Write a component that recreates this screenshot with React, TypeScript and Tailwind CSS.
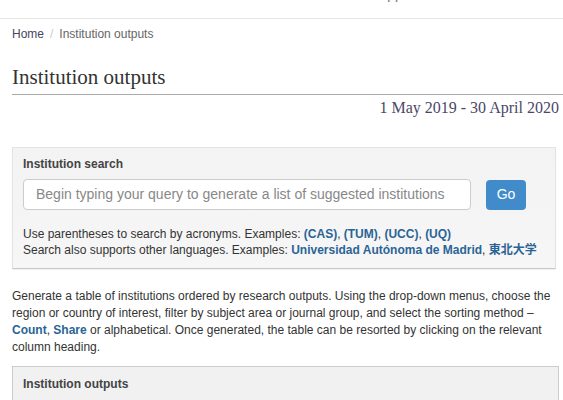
export default function App() {
  const sans = { fontFamily: '"Liberation Sans", Arial, "Noto Sans CJK SC", sans-serif' };
  const serif = { fontFamily: '"Liberation Serif", "Times New Roman", serif' };
  return (
    <div className="w-[563px] h-[400px] overflow-hidden bg-white text-[#333]" style={sans}>
      <div className="h-[19px] border-b border-[#e7e7e7] overflow-hidden flex">
        <span className="ml-[378px] -mt-[15px] text-[14px] leading-[18px] text-[#777]">Apps</span>
      </div>
      <div className="pl-3 pr-1">
        <div className="pt-[7px] text-[12px] leading-[17px] flex gap-[6px]">
          <span className="text-[#454560]">Home</span>
          <span className="text-[#ccc]">/</span>
          <span className="text-[#666]">Institution outputs</span>
        </div>
        <h1 className="mt-[22px] -mr-1 text-[21px] leading-[24px] text-[#333] pb-[5px] border-b border-[#aaa]" style={serif}>
          Institution outputs
        </h1>
        <div className="text-right text-[16px] leading-[18px] mt-[4px] text-[#4a4868]" style={serif}>
          1 May 2019 - 30 April 2020
        </div>
        <div className="mt-[30px] mr-[3px] border border-[#e3e3e3] border-b-[#c8c8c8] bg-gradient-to-b from-[#f3f3f3] to-[#f6f6f6] px-[10px] pt-[8px] pb-[10px] shadow-[0_1px_1px_rgba(0,0,0,0.05)]">
          <div className="text-[12px] font-bold leading-[16px] text-[#444]">Institution search</div>
          <div className="mt-[7px] flex items-center gap-[15px]">
            <div className="w-[448px] h-[31px] bg-white border border-[#ccc] rounded-[4px] flex items-center px-[12px] text-[14px] text-[#888]">
              Begin typing your query to generate a list of suggested institutions
            </div>
            <div className="w-[40px] h-[30px] bg-[#428bca] rounded-[4px] flex items-center justify-center text-white text-[14px]">
              Go
            </div>
          </div>
          <div className="mt-[16px] text-[12px] leading-[16px] text-[#333]">
            <div>
              Use parentheses to search by acronyms. Examples: <b className="text-[#2a6496]">(CAS)</b>, <b className="text-[#2a6496]">(TUM)</b>, <b className="text-[#2a6496]">(UCC)</b>, <b className="text-[#2a6496]">(UQ)</b>
            </div>
            <div>
              Search also supports other languages. Examples: <b className="text-[#2a6496]">Universidad Autónoma de Madrid</b>, <b className="text-[#2a6496]">東北大学</b>
            </div>
          </div>
        </div>
        <p className="mt-[19px] text-[12px] leading-[17px] text-[#333] pr-[8px]">
          Generate a table of institutions ordered by research outputs. Using the drop-down menus, choose the region or country of interest, filter by subject area or journal group, and select the sorting method – <b className="text-[#2a6496]">Count</b>, <b className="text-[#2a6496]">Share</b> or alphabetical. Once generated, the table can be resorted by clicking on the relevant column heading.
        </p>
        <div className="mt-[10px] border border-[#ccc] bg-[#f1f1f1] px-[10px] pt-[9px] h-[60px]">
          <div className="text-[12px] font-bold leading-[16px] text-[#444]">Institution outputs</div>
        </div>
      </div>
    </div>
  );
}
